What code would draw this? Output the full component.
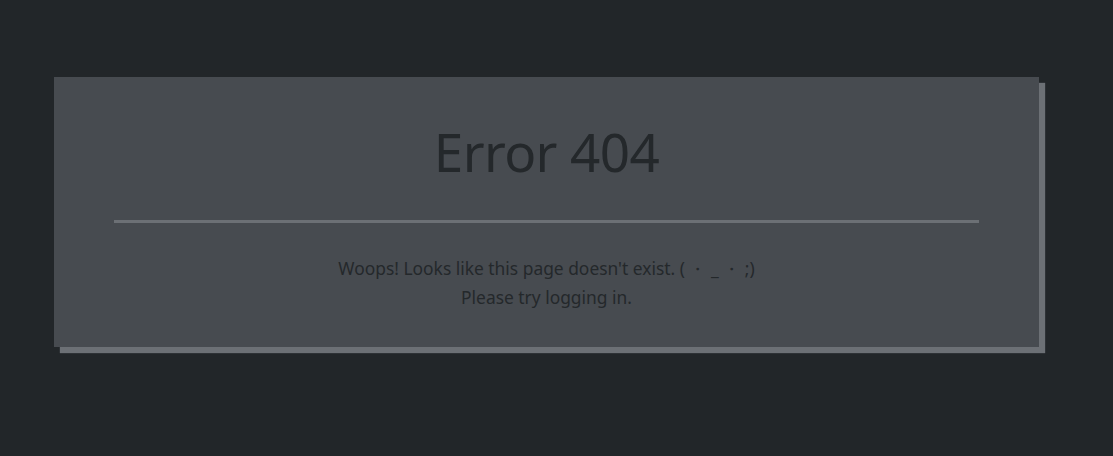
export default function App() {
  return (
    <main
      className="min-h-[456px] bg-[#222629] pt-[77px] pl-[54px]"
      style={{ fontFamily: '"Noto Sans", "Open Sans", sans-serif' }}
    >
      <div className="w-[985px] h-[270px] bg-[#474b50] shadow-[6px_6px_1px_#6c7075] px-[60px] pt-[38px] text-center text-[#24282b]">
        <h1 className="text-[53px] leading-[74px] tracking-[-0.6px]">Error 404</h1>
        <div className="mt-[31px] h-[3px] bg-[#6c7075]" />
        <p className="mt-[31px] text-[17.4px] leading-[29px]">
          Woops! Looks like this page doesn't exist. ( ・ _ ・ ;)
          <br />
          Please try logging in.
        </p>
      </div>
    </main>
  );
}
